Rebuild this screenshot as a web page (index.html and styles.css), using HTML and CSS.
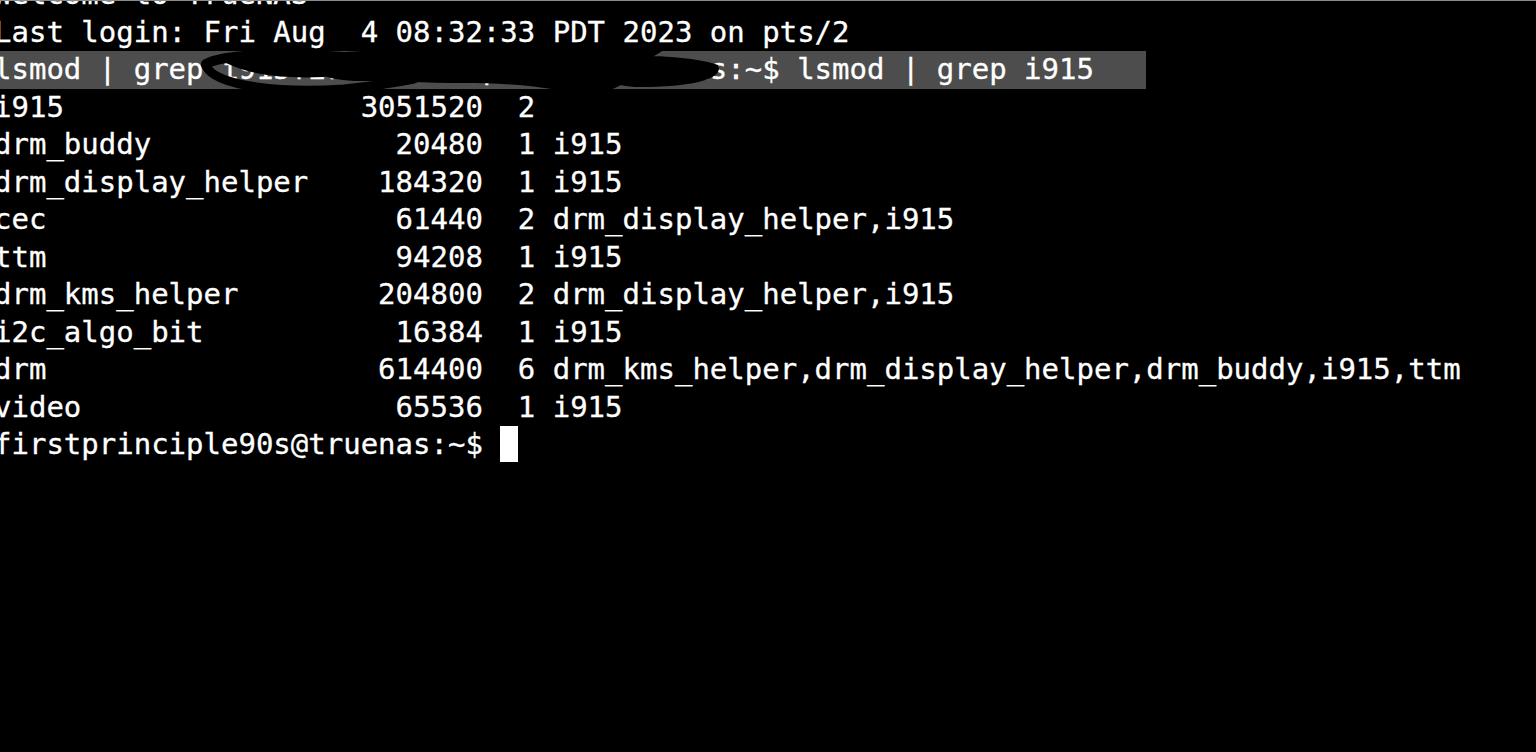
FILE: index.html
```html
<!DOCTYPE html>
<html lang="en">
<head>
  <meta charset="UTF-8" />
  <meta name="viewport" content="width=device-width, initial-scale=1.0"/>
  <title>truenas - ssh</title>
  <link rel="stylesheet" href="styles.css">
</head>
<body>

<div class="screen">
  <div class="lines">
    <div class="line">Welcome to TrueNAS</div>
    <div class="line">Last login: Fri Aug  4 08:32:33 PDT 2023 on pts/2</div>
    <div class="line selected">lsmod | grep i915firstprinciple90s@truenas:~$ lsmod | grep i915
      <!-- redaction scribble over the hostname -->
      <svg class="scribble" viewBox="0 0 1160 40" width="1160" height="40">
        <path d="M212,13 C230,2 300,2 350,6" fill="none" stroke="#000" stroke-width="10" stroke-linecap="round"/>
        <path d="M212,15 C222,36 290,42 350,38 C380,35 400,32 420,28" fill="none" stroke="#000" stroke-width="9" stroke-linecap="round"/>
        <path d="M232,12 C262,2 310,4 340,10 L330,26 C290,28 256,24 232,12 Z" fill="#000"/>
        <path d="M300,6 C366,-4 486,-3 566,-4 L670,-1 C656,8 640,14 650,20 L630,32 C612,44 588,46 566,40 C540,34 500,32 470,32 C430,32 400,30 360,30 C330,28 308,20 300,6 Z" fill="#000"/>
        <path d="M604,8 C650,2 700,6 724,14 C730,26 706,36 646,36 C618,36 602,26 604,8 Z" fill="#000"/>
      </svg>
    </div>
    <div class="line">i915                 3051520  2</div>
    <div class="line">drm_buddy              20480  1 i915</div>
    <div class="line">drm_display_helper    184320  1 i915</div>
    <div class="line">cec                    61440  2 drm_display_helper,i915</div>
    <div class="line">ttm                    94208  1 i915</div>
    <div class="line">drm_kms_helper        204800  2 drm_display_helper,i915</div>
    <div class="line">i2c_algo_bit           16384  1 i915</div>
    <div class="line">drm                   614400  6 drm_kms_helper,drm_display_helper,drm_buddy,i915,ttm</div>
    <div class="line">video                  65536  1 i915</div>
    <div class="line">firstprinciple90s@truenas:~$ <span class="cursor"></span></div>
  </div>
</div>

</body>
</html>
```

FILE: styles.css
```css
html, body {
  margin: 0;
  background: #000;
}

.screen {
  height: 751px;
  border-top: 1px solid #8a8a8a;
  overflow: hidden;
  background: #000;
  color: #fff;
  font-family: "DejaVu Sans Mono", "Liberation Mono", monospace;
  font-size: 29px;
  line-height: 37.5px;
  -webkit-text-stroke: 0.3px #fff;
}

.lines {
  margin-top: -25px;
  margin-left: -6px;
}

.line {
  white-space: pre;
  height: 37.5px;
}

.selected {
  position: relative;
  width: 66ch;
  background: #4d4d4d;
}

.scribble {
  position: absolute;
  left: 0;
  top: 0;
  overflow: visible;
}

.cursor {
  display: inline-block;
  width: 1ch;
  height: 36px;
  vertical-align: top;
  background: #fff;
}
```
